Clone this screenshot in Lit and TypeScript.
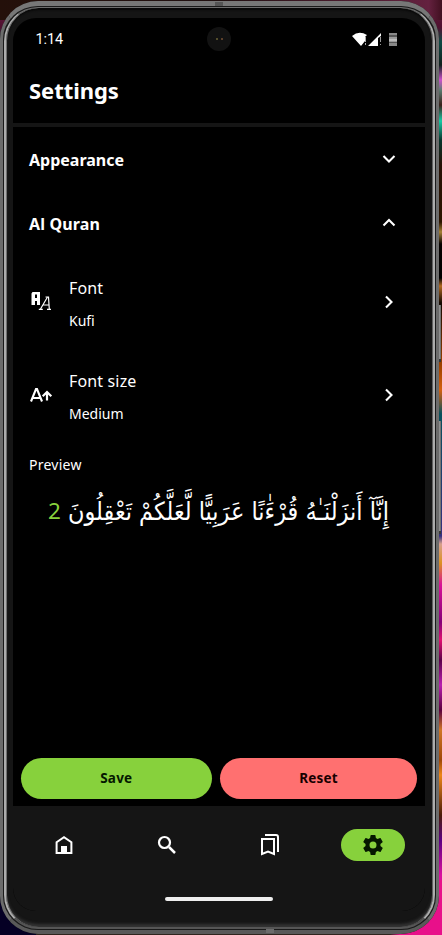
import { LitElement, html, svg, css } from "lit";
import { customElement } from "lit/decorators.js";

const chevron = (d: string) => svg`<svg width="16" height="16" viewBox="0 0 16 16" fill="none" stroke="#fff" stroke-width="2.1"><path d=${d} /></svg>`;

@customElement("app-root")
export class AppRoot extends LitElement {
  static styles = css`
    :host { display: block; width: 442px; height: 935px; position: relative; overflow: hidden; color: #fff;
      font-family: "Noto Sans", sans-serif; box-sizing: border-box;
      background: linear-gradient(90deg, #24100a, #201010 50%, #64213f 97%, #401020) 0 0 / 442px 20px no-repeat,
        linear-gradient(90deg, #050024 0 36px, #30251e 36px 390px, #e8108a 400px) 0 880px / 442px 55px no-repeat,
        linear-gradient(180deg, #66213f 0, #501030 27px, #0d4943 42px, #10201c 65px, #cb50cb 80px, #5b7b70 90px, #39201a 105px, #18c9a5 121px, #07352c 140px, #261105 165px, #2c1500 222px, #a58035 232px, #060200 244px, #000 278px, #b16820 286px, #130800 303px, #a94700 370px, #d46010 390px, #07505c 414px, #35307e 536px, #d79f8c 544px, #dc9120 563px, #d81298 585px, #850078 622px, #e01070 640px, #5c0049 660px, #b820b0 685px, #5b003e 710px, #cf7625 730px, #9e4708 760px, #ed8618 775px, #4a1c08 815px, #5a0082 840px, #d90f9f 875px, #e8108a 935px); }
    * { box-sizing: border-box; }
    .key { position: absolute; left: 437px; width: 4px; background: linear-gradient(90deg, #777, #929292 60%, #666); border-bottom: 3px solid #383838; }
    .key.power { top: 305px; height: 57px; }
    .key.volume { top: 421px; height: 113px; }
    .phone { position: absolute; left: 0; top: 1px; width: 439px; height: 933px; border-radius: 38px; background: #151515; padding: 17px 14px 23px 13px; }
    .rim { position: absolute; inset: 0; border-radius: 38px; border: 3px solid #6c6c6c; border-top: 5px solid #777; border-bottom: 4px solid #595959; box-shadow: inset 0 0 0 1px #1a1a1a; }
    .rim.inner { inset: 6px 4px 5px 4px; border: 2px solid #adadad; border-top: 1px solid #6d6d6d; border-bottom: 2px solid #555; border-radius: 34px;
      box-shadow: inset 1px 0 #707070, inset -1px 0 #606060, inset 0 2px 2px #080808, inset 0 -3px 3px #333; }
    .screen { width: 412px; height: 893px; border-radius: 23px; background: #000; overflow: hidden; display: flex; flex-direction: column; position: relative; }
    .status { height: 42px; display: flex; align-items: center; padding: 0 26px 0 22.5px; justify-content: space-between; font: 14.5px Roboto, sans-serif; letter-spacing: -.1px; }
    .camera { position: absolute; left: 194px; top: 9px; width: 24px; height: 24px; border-radius: 50%; background: #121212; display: flex; justify-content: center; align-items: center; gap: 3px; }
    .camera i { width: 2px; height: 2px; background: #6b6334; border-radius: 1px; }
    .camera i + i { background: #765035; }
    .title { height: 67px; border-bottom: 4px solid #151515; padding: 14px 16px 0; font-size: 22px; line-height: 32px; font-weight: 700; margin: 0; letter-spacing: -.05px; }
    .section { height: 64px; display: flex; align-items: center; justify-content: space-between; padding: 2px 28px 0 16px; font-size: 16px; font-weight: 700; }
    .section svg { position: relative; top: -1px; }
    .section .wide { letter-spacing: .15px; }
    .item { height: 93px; display: grid; grid-template-columns: 40px 1fr 16px; align-items: center; padding: 0 28px 0 16px; }
    .copy { display: flex; flex-direction: column; gap: 7px; position: relative; top: 1px; }
    .name { font-size: 16px; line-height: 26px; letter-spacing: .15px; position: relative; top: 1px; }
    .value { font-size: 14px; line-height: 24px; position: relative; top: 1.5px; }
    svg { display: block; }
    .label { height: 45px; padding: 2px 16px 0; font-size: 14px; line-height: 44px; letter-spacing: .25px; }
    .verse { height: 50px; }
    .arabic { font-family: "DejaVu Sans", sans-serif; font-size: 25px; }
    .number { font-size: 22.5px; fill: #87d13c; }
    .actions { margin-top: auto; height: 48px; padding: 0 8px 0 7.5px; display: grid; grid-template-columns: 191.5px 197px; gap: 8px; }
    button { height: 40.5px; border: 0; border-radius: 21px; padding: 0; font: 700 13.5px "Noto Sans", sans-serif; letter-spacing: .2px; background: #87d13c; color: #051800; }
    .reset { background: #ff7070; color: #170000; }
    nav { height: 105px; background: #151515; display: grid; grid-template-columns: repeat(4, 103px); align-items: start; justify-items: center; padding-top: 22.5px; position: relative; left: -.5px; width: 413px; }
    .tab { width: 64px; height: 32px; display: grid; place-items: center; border-radius: 16px; }
    .active { background: #87d13c; }
    .handle { position: absolute; left: 152px; top: 90.5px; width: 108px; height: 4px; border-radius: 2px; background: #eee; }
    .seam { position: absolute; width: 8px; height: 4px; background: #6c6c6c; left: 266px; top: 929px; }
    .seam.top { left: 215px; top: 2px; background: #555; }
  `;

  private item(name: string, value: string, icon: unknown) {
    return html`<div class="item">${icon}<div class="copy"><span class="name">${name}</span><span class="value">${value}</span></div>${chevron("m5 2.5 5.5 5.5-5.5 5.5")}</div>`;
  }

  render() {
    return html`
      <div class="key power"></div><div class="key volume"></div>
      <div class="phone">
        <div class="rim"></div><div class="rim inner"></div>
        <div class="screen">
          <div class="status"><span>1:14</span>
            <svg width="47" height="16" viewBox="0 0 47 16"><path d="M0 5Q7-1 15 4l-2 2v4l-4 5Z" fill="#fff"/><path d="M13 6h1v5h-1zM13 12h1v2h-1z" fill="#aaa"/><path d="M16 15 29 2v3l-3 2v8Z" fill="#fff"/><path d="M28 6h1v5h-1zM28 13h1v1h-1z" fill="#999"/><path d="M37 2h8v2h-8zM37 12h8v3h-8z" fill="#888"/><path d="M37 4h8v2h-8zM37 11h8v1h-8z" fill="#555"/><path d="M37 6h8v5h-8z" fill="#999"/><path d="M37 8h8v2h-8z" fill="#bbb"/></svg>
          </div>
          <div class="camera"><i></i><i></i></div>
          <h1 class="title">Settings</h1>
          <div class="section"><span>Appearance</span>${chevron("m2.5 5 5.5 5.5 5.5-5.5")}</div>
          <div class="section"><span class="wide">Al Quran</span>${chevron("m2.5 10.5 5.5-5.5 5.5 5.5")}</div>
          ${this.item("Font", "Kufi", svg`<svg width="24" height="24" viewBox="0 0 24 24"><path d="M2.5 15V3.5l1-1.5H11v13H8v-4H6v4ZM6 4.5V8h2V4.5Z" fill="#fff" fill-rule="evenodd"/><path d="m11.5 19 7-12h1l.8 12M14 15h6M9.8 19.4h4M18 19.4h4M16.5 7h3" stroke="#fff" stroke-width="1.2" fill="none"/></svg>`)}
          ${this.item("Font size", "Medium", svg`<svg width="24" height="24" viewBox="0 0 24 24" fill="none" stroke="#fff"><path d="M2 18.5 7 6h1l5 12.5M4 15h7" stroke-width="2.1"/><path d="M18 17.5V8.5m-4.3 4.8L18 9l4.3 4.3" stroke-width="2.2"/></svg>`)}
          <div class="label">Preview</div>
          <svg class="verse" width="412" height="50" viewBox="0 0 412 50" fill="#fff">
            <text class="arabic" x="376" y="33.5" direction="rtl" textLength="321" lengthAdjust="spacingAndGlyphs">إِنَّآ أَنزَلْنَـٰهُ قُرْءَٰنًا عَرَبِيًّا لَّعَلَّكُمْ تَعْقِلُونَ</text>
            <text class="number" x="35" y="33">2</text>
          </svg>
          <div class="actions"><button>Save</button><button class="reset">Reset</button></div>
          <nav>
            <div class="tab"><svg width="24" height="24" viewBox="0 0 24 24"><path d="M4.6 20V9.2L12 4.2l7.4 5V20Z" fill="none" stroke="#fff" stroke-width="2"/><path d="M9 13h6v7H9z" fill="#fff"/></svg></div>
            <div class="tab"><svg width="24" height="24" viewBox="0 0 24 24" fill="none" stroke="#fff" stroke-width="2.2"><circle cx="9.5" cy="9.5" r="5.5"/><path d="m14 14 6 6" stroke-width="2.5"/></svg></div>
            <div class="tab"><svg width="24" height="24" viewBox="0 0 24 24" fill="none" stroke="#fff" stroke-width="2"><path d="M4 6h12v15l-6-2.5L4 21ZM7 2h11a2 2 0 0 1 2 2v15"/></svg></div>
            <div class="tab active"><svg width="24" height="24" viewBox="0 0 24 24" fill="#051800"><path d="M19.43 12.98a7.8 7.8 0 0 0 0-1.96l2.11-1.65a.5.5 0 0 0 .12-.64l-2-3.46a.5.5 0 0 0-.61-.22l-2.49 1a7.3 7.3 0 0 0-1.69-.98l-.38-2.65A.5.5 0 0 0 14 2h-4a.5.5 0 0 0-.49.42l-.38 2.65c-.61.25-1.17.59-1.69.98l-2.49-1a.5.5 0 0 0-.61.22l-2 3.46a.5.5 0 0 0 .12.64l2.11 1.65a8 8 0 0 0 0 1.96l-2.11 1.65a.5.5 0 0 0-.12.64l2 3.46c.12.22.39.3.61.22l2.49-1c.52.4 1.08.73 1.69.98l.38 2.65c.03.24.24.42.49.42h4c.25 0 .46-.18.49-.42l.38-2.65c.61-.25 1.17-.59 1.69-.98l2.49 1c.23.09.49 0 .61-.22l2-3.46a.5.5 0 0 0-.12-.64ZM12 15.5a3.5 3.5 0 1 1 0-7 3.5 3.5 0 0 1 0 7Z"/></svg></div>
            <div class="handle"></div>
          </nav>
        </div>
      </div>
      <div class="seam top"></div><div class="seam"></div>
    `;
  }
}
